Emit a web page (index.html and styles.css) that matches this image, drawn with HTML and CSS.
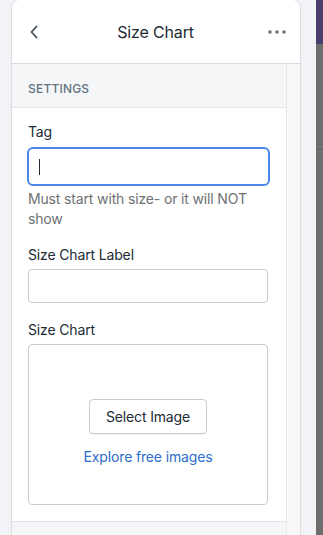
FILE: index.html
```html
<!DOCTYPE html>
<html lang="en">
<head>
    <meta charset="UTF-8">
    <meta name="viewport" content="width=device-width, initial-scale=1.0">
    <title>Size Chart</title>
    <link rel="stylesheet" href="styles.css">
</head>
<body>

    <div class="layout">
        <div class="panel">
            <div class="panel-header">
                <button class="icon-btn back" type="button" aria-label="Back">
                    <svg width="10" height="14" viewBox="0 0 10 14"><path d="M7.5 1.5 2.5 7l5 5.5" fill="none" stroke="#454f5b" stroke-width="1.8" stroke-linecap="round" stroke-linejoin="round"/></svg>
                </button>
                <h1 class="title">Size Chart</h1>
                <button class="icon-btn more" type="button" aria-label="More">
                    <svg width="18" height="4" viewBox="0 0 18 4"><circle cx="2" cy="2" r="1.8" fill="#637381"/><circle cx="9" cy="2" r="1.8" fill="#637381"/><circle cx="16" cy="2" r="1.8" fill="#637381"/></svg>
                </button>
            </div>
            <div class="panel-body">
                <div class="main">
                    <div class="section-title">Settings</div>
                    <div class="section">
                        <label class="field-label">Tag</label>
                        <div class="input focused"><span class="caret"></span></div>
                        <p class="help">Must start with size- or it will NOT show</p>

                        <label class="field-label spaced">Size Chart Label</label>
                        <div class="input"></div>

                        <label class="field-label spaced2">Size Chart</label>
                        <div class="dropzone">
                            <button class="btn" type="button">Select Image</button>
                            <a class="link" href="#">Explore free images</a>
                        </div>
                    </div>
                    <div class="section-end"></div>
                </div>
                <div class="scrolltrack"></div>
            </div>
        </div>
        <div class="gap"></div>
        <div class="preview">
            <div class="preview-top"></div>
            <div class="preview-line"></div>
        </div>
    </div>

</body>
</html>
```

FILE: styles.css
```css
body {
    font-family: 'Inter', 'Noto Sans', sans-serif;
    background: #f1f3f6;
    margin: 0;
    color: #212b36;
    font-size: 14px;
    letter-spacing: -0.15px;
}
.layout {
    display: flex;
    height: 535px;
    padding-left: 12px;
    overflow: hidden;
}
.panel {
    width: 288px;
    background: #f4f6f8;
    border-radius: 8px 8px 0 0;
    box-shadow: 0 0 0 1px rgba(63, 63, 68, 0.06), 0 1px 3px rgba(63, 63, 68, 0.12);
    display: flex;
    flex-direction: column;
}
.panel-header {
    height: 63px;
    background: white;
    border-radius: 8px 8px 0 0;
    border-bottom: 1px solid #d6dbe0;
    display: flex;
    align-items: center;
    padding: 0 11px 0 10px;
}
.icon-btn {
    background: none;
    border: none;
    padding: 0;
    width: 24px;
    height: 24px;
    display: flex;
    align-items: center;
    justify-content: center;
}
.title {
    flex: 1;
    text-align: center;
    font-size: 16px;
    font-weight: 400;
    margin: 0;
}
.panel-body {
    flex: 1;
    display: flex;
}
.main {
    width: 274px;
    display: flex;
    flex-direction: column;
}
.section-title {
    height: 37px;
    padding: 6px 0 0 16px;
    border-bottom: 1px solid #e3e6ea;
    display: flex;
    align-items: center;
    font-size: 12px;
    font-weight: 500;
    letter-spacing: 0.2px;
    text-transform: uppercase;
    color: #637381;
}
.section {
    background: white;
    padding: 14px 18px 16px 16px;
    border-bottom: 1px solid #dfe3e8;
}
.field-label {
    display: block;
    line-height: 20px;
}
.spaced {
    margin-top: 16px;
}
.spaced2 {
    margin-top: 17px;
}
.input {
    height: 32px;
    border: 1px solid #c4cdd5;
    border-radius: 4px;
    margin-top: 4px;
    background: white;
}
.input.focused {
    height: 35px;
    margin: 5px -2px 0 -1px;
    border: 2px solid #4b87e8;
    border-radius: 6px;
    display: flex;
    align-items: center;
    padding-left: 10px;
}
.caret {
    width: 1px;
    height: 16px;
    background: #212b36;
}
.help {
    margin: 3px 0 0;
    line-height: 20px;
    color: #6d7175;
}
.dropzone {
    height: 161px;
    margin-top: 4px;
    border: 1px solid #c4cdd5;
    border-radius: 4px;
    display: flex;
    flex-direction: column;
    align-items: center;
    padding-top: 54px;
    box-sizing: border-box;
}
.btn {
    font-family: inherit;
    font-size: 14px;
    letter-spacing: inherit;
    color: #212b36;
    background: white;
    border: 1px solid #c4cdd5;
    border-radius: 4px;
    width: 118px;
    height: 35px;
    box-shadow: 0 1px 0 rgba(22, 29, 37, 0.05);
}
.link {
    margin-top: 13px;
    color: #2c6ecb;
    text-decoration: none;
    line-height: 20px;
}
.section-end {
    flex: 1;
}
.scrolltrack {
    width: 13px;
    background: #f8f8f9;
    border-left: 1px solid #e6e8ea;
}
.gap {
    width: 16px;
}
.preview {
    flex: 1;
    background: #6d6d6d;
}
.preview-top {
    height: 44px;
    background: #4a3f6c;
}
.preview-line {
    height: 1px;
    margin-top: 102px;
    background: #7c7c7c;
}
```
